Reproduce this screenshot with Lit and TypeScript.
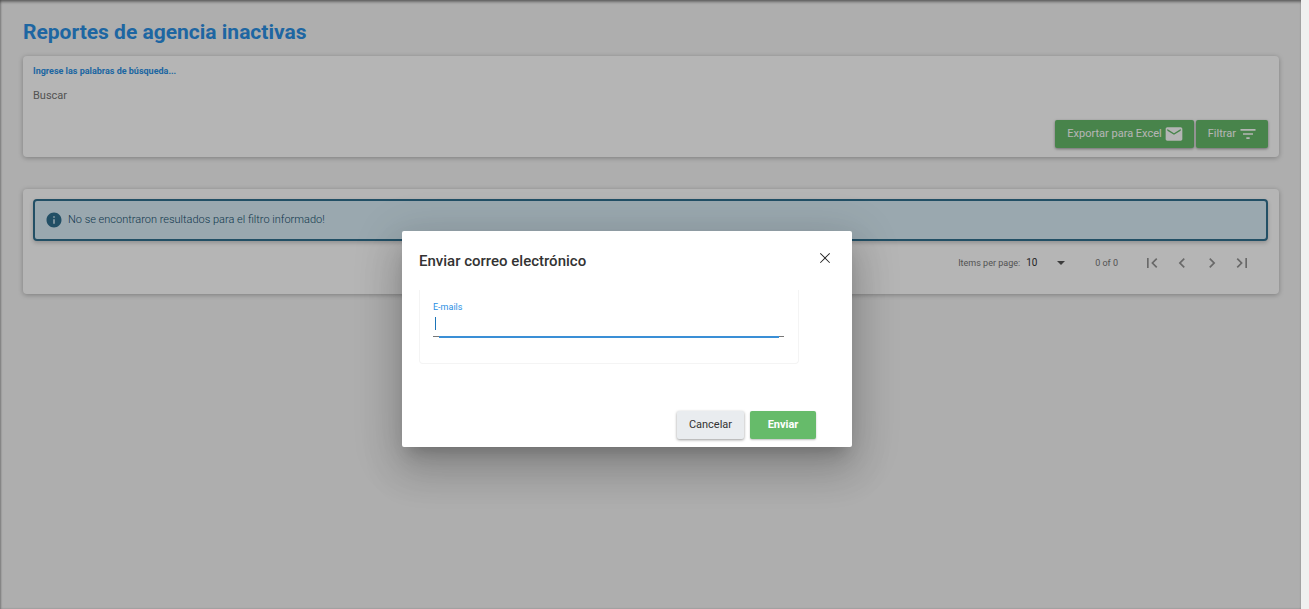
import { LitElement, html, css, svg } from "lit";
import { customElement, property } from "lit/decorators.js";

const ICONS: Record<string, string> = {
  mail: "M20 4H4c-1.100 0-2 .9-2 2v12c0 1.100.9 2 2 2h16c1.100 0 2-.9 2-2V6c0-1.100-.9-2-2-2zm0 4l-8 5-8-5V6l8 5 8-5v2z",
  filter: "M10 18h4v-2h-4v2zM3 6v2h18V6H3zm3 7h12v-2H6v2z",
  info: "M12 2C6.480 2 2 6.480 2 12s4.480 10 10 10 10-4.480 10-10S17.520 2 12 2zm1 15h-2v-6h2v6zm0-8h-2V7h2v2z",
  first: "M18.410 16.590L13.820 12l4.590-4.590L17 6l-6 6 6 6zM6 6h2v12H6z",
  prev: "M15.410 7.410L14 6l-6 6 6 6 1.410-1.410L10.830 12z",
  next: "M10 6L8.590 7.410 13.170 12l-4.580 4.590L10 18l6-6z",
  last: "M5.590 7.410L10.180 12l-4.590 4.590L7 18l6-6-6-6zM16 6h2v12h-2z",
  arrow: "M4 8l8 8 8-8z",
  close: "M4.500 3.400L12 10.900l7.500-7.500 1.100 1.100L13.100 12l7.500 7.500-1.100 1.100L12 13.100l-7.500 7.500-1.100-1.100L10.900 12 3.400 4.500z",
};

@customElement("app-icon")
class AppIcon extends LitElement {
  static styles = css`
    :host { display: block; width: 20px; height: 20px; flex: none; }
    svg { display: block; width: 100%; height: 100%; fill: currentColor; }
  `;
  @property() name = "";
  render() {
    return html`<svg viewBox="0 0 24 24" aria-hidden="true">${svg`<path d=${ICONS[this.name]}></path>`}</svg>`;
  }
}

@customElement("app-root")
class AppRoot extends LitElement {
  static styles = css`
    * { box-sizing: border-box; }
    :host {
      display: flex;
      min-height: 100vh;
      font: 11px/16px Roboto, sans-serif;
      color: #333;
      background: #f0f0f0;
    }
    button, input, select { font: inherit; border: 0; margin: 0; padding: 0; }
    .shell { position: relative; flex: 1; margin-right: 8px; overflow: hidden; background: #f5f5f5; }
    .page {
      min-height: 100vh;
      padding: 16px 22px 16px 23px;
      box-shadow: inset 0 3px 3px -1px rgba(0, 0, 0, 0.4), inset 1px 0 2px rgba(0, 0, 0, 0.25);
    }
    h1 { margin: 0 0 8px; font-size: 21px; line-height: 32px; font-weight: 700; color: #2b90e4; }
    .card {
      background: #fff;
      border-radius: 4px;
      padding: 10px 11px 9px 10px;
      box-shadow: 0 1px 5px rgba(0, 0, 0, 0.28);
    }
    .results { margin-top: 32px; }
    .search-label { display: block; font-size: 9px; line-height: 10px; font-weight: 700; color: #2b90e4; }
    .search { display: block; width: 100%; height: 16px; margin-top: 12px; background: none; outline: 0; color: #333; }
    .search::placeholder { color: #757575; opacity: 1; }
    .actions { display: flex; justify-content: flex-end; gap: 2px; margin-top: 16px; }
    .btn {
      display: flex;
      align-items: center;
      justify-content: center;
      height: 28px;
      padding: 0 10px 0 12px;
      border-radius: 2px;
      background: #66bb6a;
      color: #fff;
      font-weight: 400;
      box-shadow: 0 1px 3px rgba(0, 0, 0, 0.4);
    }
    .btn app-icon { margin-left: 2px; }
    .alert {
      display: flex;
      align-items: center;
      height: 42px;
      gap: 5px;
      padding: 0 10px;
      border: 2px solid #31708f;
      border-radius: 4px;
      background: #d9edf7;
      color: #31708f;
      box-shadow: 0 2px 4px rgba(0, 0, 0, 0.2);
    }
    .alert app-icon { width: 18px; height: 18px; }
    .alert span { font-weight: 300; color: #17506e; }
    .pager {
      display: flex;
      align-items: center;
      justify-content: flex-end;
      height: 44px;
      padding-right: 11px;
      font-size: 9px;
      color: #757575;
    }
    .size { display: flex; align-items: center; position: relative; margin-left: 6px; }
    .size select { appearance: none; width: 41px; height: 16px; font-size: 10px; background: none; color: #333; }
    .size app-icon { position: absolute; right: 0; width: 12px; height: 12px; color: #555; pointer-events: none; }
    .range { margin: 0 19px 0 28px; }
    .nav { display: flex; }
    .nav button { display: grid; place-items: center; width: 30px; height: 30px; background: none; color: #949494; }
    .overlay {
      position: absolute;
      inset: 0;
      display: flex;
      align-items: center;
      justify-content: center;
      padding: 69px 47px 0 0;
      background: rgba(0, 0, 0, 0.29);
    }
    .dialog {
      width: 450px;
      padding: 17px 17px 8px;
      background: #fff;
      border-radius: 2px;
      box-shadow: 0 11px 15px -7px rgba(0, 0, 0, 0.2), 0 24px 38px 3px rgba(0, 0, 0, 0.14), 0 9px 46px 8px rgba(0, 0, 0, 0.12);
    }
    .head { display: flex; justify-content: space-between; align-items: flex-start; }
    h2 { margin: 0; font-size: 15px; line-height: 26px; font-weight: 500; color: #333; }
    .close { display: grid; place-items: center; width: 20px; height: 20px; background: none; color: #222; }
    .close app-icon { width: 14px; height: 14px; }
    .field {
      width: 380px;
      margin-top: 16px;
      padding: 10px 14px 26px 13px;
      border: 1px solid #f4f4f4;
      border-top: 0;
      border-radius: 0 0 4px 4px;
    }
    .field label { display: block; font-size: 9px; line-height: 14px; color: #2b90e4; }
    .line { position: relative; border-bottom: 1px solid #777; }
    .line::after { content: ""; position: absolute; left: 6px; right: 5px; bottom: -2px; height: 2px; background: #3a8fd6; }
    .line input { display: block; width: 100%; height: 22px; padding: 0 2px; background: none; outline: 0; }
    .caret { position: absolute; left: 2px; top: 3px; width: 1px; height: 13px; background: #1b74b8; }
    .foot { display: flex; justify-content: flex-end; gap: 6px; margin-top: 47px; padding-right: 19px; }
    .foot .btn { width: 66px; padding: 0; }
    .foot .btn.cancel { width: 67px; background: #e9ecef; color: #333; }
    .foot .btn.send { font-weight: 700; box-shadow: 0 1px 2px rgba(0, 0, 0, 0.25); }
  `;
  render() {
    return html`
      <div class="shell">
        <main class="page">
          <h1>Reportes de agencia inactivas</h1>
          <section class="card">
            <label class="search-label" for="q">Ingrese las palabras de búsqueda...</label>
            <input class="search" id="q" type="text" placeholder="Buscar" />
            <div class="actions">
              <button class="btn">Exportar para Excel<app-icon name="mail"></app-icon></button>
              <button class="btn">Filtrar<app-icon name="filter"></app-icon></button>
            </div>
          </section>
          <section class="card results">
            <div class="alert" role="status">
              <app-icon name="info"></app-icon>
              <span>No se encontraron resultados para el filtro informado!</span>
            </div>
            <div class="pager">
              <label for="size">Items per page:</label>
              <div class="size">
                <select id="size"><option>10</option></select>
                <app-icon name="arrow"></app-icon>
              </div>
              <span class="range">0 of 0</span>
              <div class="nav">
                ${["first", "prev", "next", "last"].map(
                  (n) => html`<button aria-label=${n}><app-icon name=${n}></app-icon></button>`
                )}
              </div>
            </div>
          </section>
        </main>
        <div class="overlay">
          <div class="dialog" role="dialog" aria-modal="true" aria-labelledby="title">
            <div class="head">
              <h2 id="title">Enviar correo electrónico</h2>
              <button class="close" aria-label="Cerrar"><app-icon name="close"></app-icon></button>
            </div>
            <div class="field">
              <label for="mails">E-mails</label>
              <div class="line"><input id="mails" type="text" /><span class="caret"></span></div>
            </div>
            <div class="foot">
              <button class="btn cancel">Cancelar</button>
              <button class="btn send">Enviar</button>
            </div>
          </div>
        </div>
      </div>
    `;
  }
}
